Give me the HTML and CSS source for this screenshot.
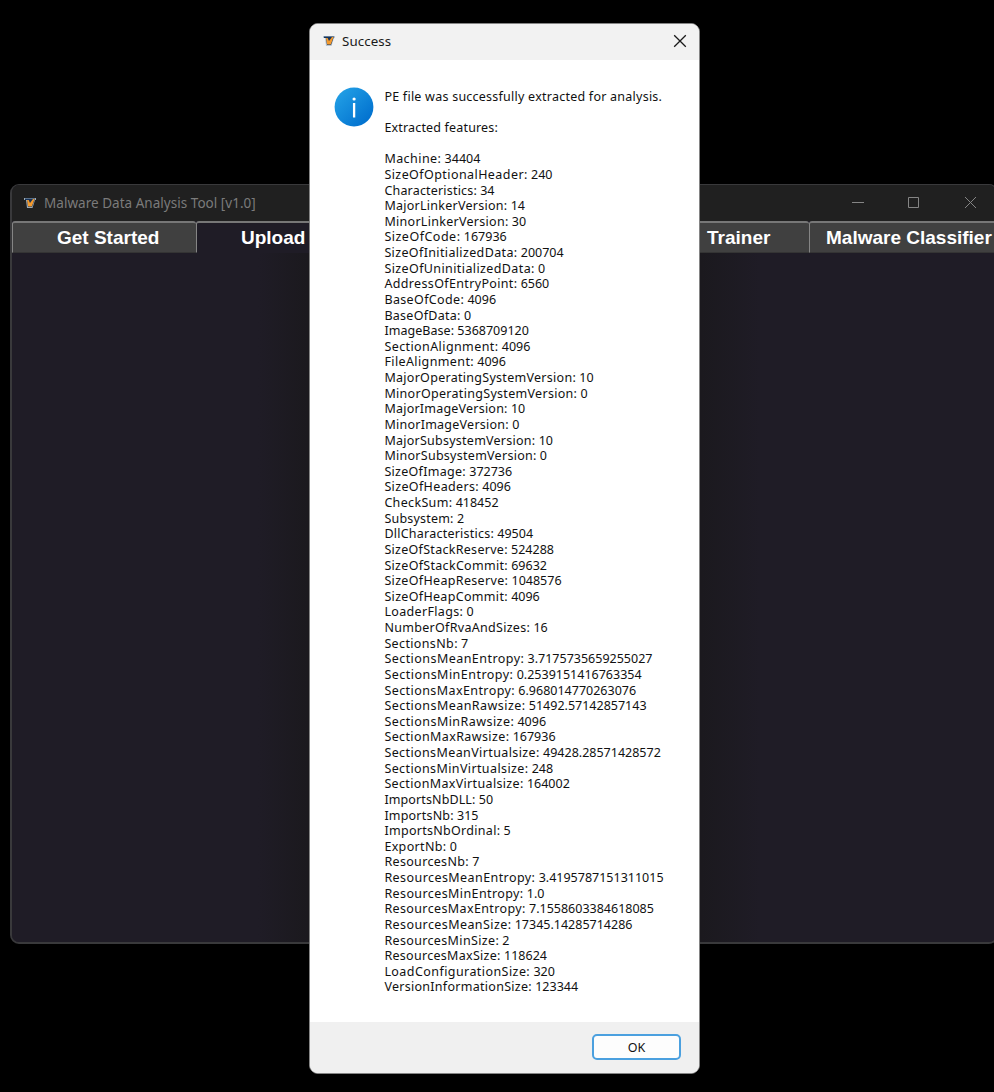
FILE: index.html
```
<!DOCTYPE html>
<html lang="en">
<head>
<meta charset="utf-8">
<title>Malware Data Analysis Tool</title>
<link rel="stylesheet" href="styles.css">
</head>
<body>
<main class="desktop">
  <section class="app">
    <header class="app-title">
      <svg class="logo" viewBox="0 0 12 12"><path fill="#9eabb5" d="M0 1h12v2h-1L8.5 11H3L2 3H0z"/><path fill="#17345a" d="M1 1.5h10L8 10H4L3 3H1z"/><path fill="#f49a2d" d="M3 3h1.6L6 6l3-4h1.5L7.8 9.5H4.2z"/></svg>
      <h1 class="app-name">Malware Data Analysis Tool [v1.0]</h1>
      <svg class="controls" viewBox="0 0 126 14"><path d="M1 6.5h12M57.5 1.5h10v10h-10zM114 1l11 11m0-11l-11 11"/></svg>
    </header>
    <nav class="tabs">
      <span class="tab tab-start">Get Started</span>
      <span class="tab tab-upload">Upload</span>
      <span class="tab tab-trainer">Trainer</span>
      <span class="tab tab-classifier">Malware Classifier</span>
    </nav>
    <div class="app-body"></div>
  </section>
  <section class="dialog">
    <header class="dialog-title">
      <svg class="logo" viewBox="0 0 12 12"><path fill="#b7c4d1" d="M0 1h12v2h-1L8.5 11H3L2 3H0z"/><path fill="#17345a" d="M1 1.5h10L8 10H4L3 3H1z"/><path fill="#f49a2d" d="M3 3h1.6L6 6l3-4h1.5L7.8 9.5H4.2z"/></svg>
      <h2 class="dialog-name">Success</h2>
      <svg class="close" viewBox="0 0 14 14"><path d="M1.2 1.2l11.6 11.6m0-11.6L1.2 12.8"/></svg>
    </header>
    <div class="dialog-body">
      <svg class="info" viewBox="0 0 40 40"><defs><linearGradient id="blue" x1="0" y1="0" x2="1" y2="1"><stop offset=".1" stop-color="#229fe5"/><stop offset=".9" stop-color="#006fce"/></linearGradient></defs><circle cx="20" cy="20" r="19.4" fill="url(#blue)"/><circle cx="20.1" cy="12" r="1.6" fill="#fff"/><path d="M20.1 16v14.5" stroke="#fff" stroke-width="2.3"/></svg>
      <div class="message">
        <p class="line summary">PE file was successfully extracted for analysis.</p>
        <p class="line gap">Extracted features:</p>
        <div class="features" id="features"></div>
      </div>
    </div>
    <footer class="dialog-footer"><button class="ok">OK</button></footer>
  </section>
</main>
<script src="features.js"></script>
</body>
</html>
```
FILE: features.js
```
// Each row: name, value, extra width spread over the name's letters.
const features = [
  ["Machine", "34404", 3.5],
  ["SizeOfOptionalHeader", "240", 9],
  ["Characteristics", "34", 3],
  ["MajorLinkerVersion", "14", 5],
  ["MinorLinkerVersion", "30", 5.5],
  ["SizeOfCode", "167936", 5.5],
  ["SizeOfInitializedData", "200704", 8],
  ["SizeOfUninitializedData", "0", 9.5],
  ["AddressOfEntryPoint", "6560", 7],
  ["BaseOfCode", "4096", 4],
  ["BaseOfData", "0", 3],
  ["ImageBase", "5368709120", 0.5],
  ["SectionAlignment", "4096", 7],
  ["FileAlignment", "4096", 5.5],
  ["MajorOperatingSystemVersion", "10", 8],
  ["MinorOperatingSystemVersion", "0", 8.5],
  ["MajorImageVersion", "10", 4],
  ["MinorImageVersion", "0", 4.5],
  ["MajorSubsystemVersion", "10", 5.5],
  ["MinorSubsystemVersion", "0", 6],
  ["SizeOfImage", "372736", 3.5],
  ["SizeOfHeaders", "4096", 5],
  ["CheckSum", "418452", 3],
  ["Subsystem", "2", 2],
  ["DllCharacteristics", "49504", 4.5],
  ["SizeOfStackReserve", "524288", 5.5],
  ["SizeOfStackCommit", "69632", 5.5],
  ["SizeOfHeapReserve", "1048576", 6],
  ["SizeOfHeapCommit", "4096", 5.5],
  ["LoaderFlags", "0", 4],
  ["NumberOfRvaAndSizes", "16", 6],
  ["SectionsNb", "7", 4],
  ["SectionsMeanEntropy", "3.7175735659255027", 9],
  ["SectionsMinEntropy", "0.2539151416763354", 9],
  ["SectionsMaxEntropy", "6.968014770263076", 8],
  ["SectionsMeanRawsize", "51492.57142857143", 9],
  ["SectionsMinRawsize", "4096", 8.5],
  ["SectionMaxRawsize", "167936", 7],
  ["SectionsMeanVirtualsize", "49428.28571428572", 9.5],
  ["SectionsMinVirtualsize", "248", 9],
  ["SectionMaxVirtualsize", "164002", 7.5],
  ["ImportsNbDLL", "50", 1.5],
  ["ImportsNb", "315", 2],
  ["ImportsNbOrdinal", "5", 5],
  ["ExportNb", "0", 3],
  ["ResourcesNb", "7", 4],
  ["ResourcesMeanEntropy", "3.4195787151311015", 9],
  ["ResourcesMinEntropy", "1.0", 8],
  ["ResourcesMaxEntropy", "7.1558603384618085", 7.5],
  ["ResourcesMeanSize", "17345.14285714286", 7.5],
  ["ResourcesMinSize", "2", 6],
  ["ResourcesMaxSize", "118624", 5],
  ["LoadConfigurationSize", "320", 9.5],
  ["VersionInformationSize", "123344", 6.5],
];

const list = document.getElementById("features");
for (const [name, value, extra] of features) {
  const line = document.createElement("p");
  line.className = "line";
  const label = document.createElement("span");
  label.textContent = `${name}:`;
  label.style.letterSpacing = `${extra / (name.length + 1)}px`;
  line.append(label, ` ${value}`);
  list.append(line);
}
```
FILE: styles.css
```
* { box-sizing: border-box; }
body { margin: 0; background: #000; }
h1, h2, p { margin: 0; font-weight: 400; }
.desktop { position: relative; width: 994px; height: 1092px; overflow: hidden; background: #000; font-family: "Noto Sans", sans-serif; }
.app { position: absolute; left: 10px; top: 184px; width: 988px; height: 760px; display: flex; flex-direction: column; border: 2px solid #39393b; border-top-width: 1px; border-radius: 9px; overflow: hidden; background: #1f1c26; }
.app-title { height: 36px; flex: none; display: flex; align-items: center; padding: 0 19px 0 12px; background: #202020; }
.logo { width: 12px; height: 12px; flex: none; }
.app-name { flex: 1; margin-left: 8px; font-size: 13.5px; letter-spacing: .03px; color: #7b7b7b; white-space: nowrap; }
.controls { width: 126px; height: 14px; fill: none; stroke: #858585; }
.tabs { display: flex; height: 32px; flex: none; font: bold 19px/31px "Liberation Sans", sans-serif; color: #fff; }
.tab { flex: none; border-top: 2px solid #777; border-left: 1px solid #858585; border-bottom: 1px solid #343434; border-radius: 3px 3px 0 0; background: #404040; white-space: nowrap; line-height: 29px; }
.tab-start { width: 184px; padding-left: 44px; }
.tab-upload { width: 184px; padding-left: 44px; background: #1f1c26; border-bottom-color: #1f1c26; }
.tab-trainer { width: 429px; padding-left: 326px; }
.tab-classifier { width: 187px; padding-left: 16px; }
.app-body { flex: 1; background: linear-gradient(90deg, #1f1c26 25%, #1b191e 30%, #1b191e 70%, #1f1c26 76%); }
.dialog { position: absolute; left: 309px; top: 23px; width: 391px; height: 1051px; display: flex; flex-direction: column; border: 1px solid #858585; border-radius: 9px; overflow: hidden; background: #fff; }
.dialog-title { height: 36px; flex: none; display: flex; align-items: center; padding: 0 12px 2px 13px; background: #f2f2f2; }
.dialog-name { flex: 1; margin-left: 7px; font-size: 13.3px; letter-spacing: .1px; color: #1a1a1a; }
.close { width: 14px; height: 14px; fill: none; stroke: #1a1a1a; stroke-width: 1.3; }
.dialog-body { flex: 1; display: flex; align-items: flex-start; padding: 27px 0 0 24px; }
.info { width: 40px; height: 40px; flex: none; }
.message { margin-left: 10.4px; padding-top: 1.8px; font-size: 12.5px; line-height: 15.63px; color: #111; white-space: nowrap; }
.line { height: 15.63px; }
.summary { letter-spacing: .24px; }
.gap { margin: 15.63px 0; letter-spacing: .17px; }
.dialog-footer { height: 51px; flex: none; display: flex; justify-content: flex-end; align-items: flex-start; padding: 12px 18px; background: #f0f0f0; }
.ok { width: 89px; height: 26px; padding: 0; border: 2px solid #4ba0df; border-radius: 5px; background: #fdfdfd; color: #111; font: 12.5px "Noto Sans", sans-serif; }
```
